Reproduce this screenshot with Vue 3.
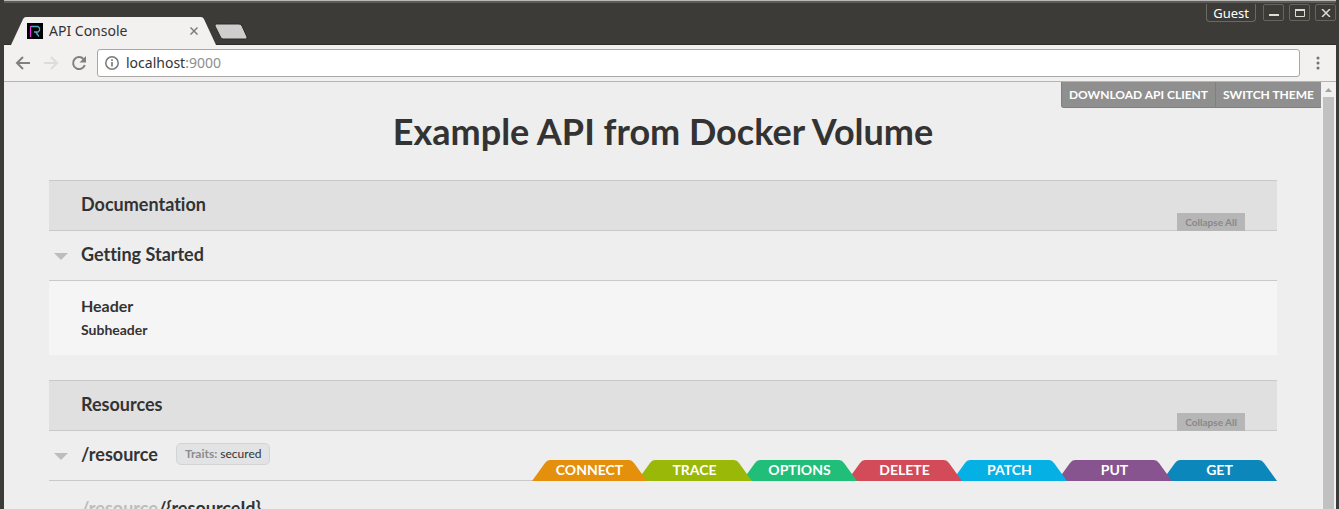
<script setup>
const methods = [
  { name: 'CONNECT', cls: 'connect' },
  { name: 'TRACE', cls: 'trace' },
  { name: 'OPTIONS', cls: 'options' },
  { name: 'DELETE', cls: 'delete' },
  { name: 'PATCH', cls: 'patch' },
  { name: 'PUT', cls: 'put' },
  { name: 'GET', cls: 'get' },
]
</script>

<template>
  <div class="window">
    <header class="titlebar">
      <div class="tabs">
        <div class="tab">
          <svg class="tab-shape" viewBox="0 0 204 28" preserveAspectRatio="none" aria-hidden="true">
            <path d="M0 28 L12 2 Q13 0 15 0 H189 Q191 0 192 2 L204 28 Z" fill="#f2f1f0" />
          </svg>
          <svg class="favicon" width="16" height="16" viewBox="0 0 16 16" aria-hidden="true">
            <rect width="16" height="16" fill="#000" />
            <path d="M3.500 14 V3.500 H5" fill="none" stroke="#e935e0" stroke-width="1.200" />
            <path d="M4 3.500 H11 L12.500 5 V7.500 L11 9 H7 M9 9.500 L12 13.500" fill="none" stroke="#4fa6c4" stroke-width="1.300" />
          </svg>
          <span class="tab-title">API Console</span>
          <button class="tab-close" aria-label="Close tab">
            <svg width="8" height="8" viewBox="0 0 8 8"><path d="M.5 .5 L7.500 7.500 M7.500 .5 L.5 7.500" stroke="#7d7c7a" stroke-width="1.500" /></svg>
          </button>
        </div>
        <button class="new-tab" aria-label="New tab">
          <svg width="34" height="17" viewBox="0 0 34 17"><path d="M2.500 1 H25 Q27 1 28 3 L33 14 Q33.500 16 31.500 16 H9 Q7.500 16 6.500 14 L1 3 Q.5 1 2.500 1 Z" fill="#d0cecc" stroke="#2c2b28" /></svg>
        </button>
      </div>
      <div class="controls">
        <button class="guest">Guest</button>
        <button class="win-btn" aria-label="Minimize">
          <svg width="10" height="8" viewBox="0 0 10 8"><path d="M0 6 H10" stroke="#dfdbd2" stroke-width="2" /></svg>
        </button>
        <button class="win-btn" aria-label="Maximize">
          <svg width="10" height="8" viewBox="0 0 10 8"><path d="M.5 0 V7.500 H9.500 V0" fill="none" stroke="#dfdbd2" /><path d="M0 1 H10" stroke="#dfdbd2" stroke-width="2" /></svg>
        </button>
        <button class="win-btn" aria-label="Close">
          <svg width="10" height="8" viewBox="0 0 10 8"><path d="M1 0 L9 8 M9 0 L1 8" stroke="#dfdbd2" stroke-width="1.500" /></svg>
        </button>
      </div>
    </header>

    <nav class="toolbar">
      <button class="nav" aria-label="Back">
        <svg width="16" height="16" viewBox="0 0 16 16"><path d="M15 8 H2 M8 2 L2 8 L8 14" fill="none" stroke="#80807e" stroke-width="2" /></svg>
      </button>
      <button class="nav" aria-label="Forward">
        <svg width="16" height="16" viewBox="0 0 16 16"><path d="M1 8 H14 M8 2 L14 8 L8 14" fill="none" stroke="#dddcdb" stroke-width="2" /></svg>
      </button>
      <button class="nav" aria-label="Reload">
        <svg width="16" height="16" viewBox="0 0 16 16"><path d="M13.800 10 A6 6 0 1 1 12.500 4" fill="none" stroke="#80807e" stroke-width="2" /><path d="M15 1 V7.500 H8.500 Z" fill="#80807e" /></svg>
      </button>
      <label class="address">
        <svg width="14" height="14" viewBox="0 0 14 14" aria-hidden="true"><circle cx="7" cy="7" r="6.200" fill="none" stroke="#7a7a7a" stroke-width="1.500" /><path d="M7 6 V10.500 M7 3.300 V5" stroke="#7a7a7a" stroke-width="1.700" /></svg>
        <span class="url" role="textbox" aria-label="Address" contenteditable="true">localhost<span class="port">:9000</span></span>
      </label>
      <button class="menu" aria-label="Menu">
        <svg width="4" height="14" viewBox="0 0 4 14"><circle cx="2" cy="2" r="1.500" /><circle cx="2" cy="7" r="1.500" /><circle cx="2" cy="12" r="1.500" /></svg>
      </button>
    </nav>

    <div class="viewport">
      <main class="page">
        <div class="page-actions">
          <button>DOWNLOAD API CLIENT</button>
          <button>SWITCH THEME</button>
        </div>
        <h1>Example API from Docker Volume</h1>

        <section>
          <div class="section-head">
            <h2>Documentation</h2>
            <button class="collapse">Collapse All</button>
          </div>
          <div class="row">
            <button class="arrow" aria-label="Toggle Getting Started"></button>
            <h2>Getting Started</h2>
          </div>
          <div class="doc">
            <h3>Header</h3>
            <h4>Subheader</h4>
          </div>
        </section>

        <section>
          <div class="section-head">
            <h2>Resources</h2>
            <button class="collapse">Collapse All</button>
          </div>
          <div class="row">
            <button class="arrow" aria-label="Toggle /resource"></button>
            <h2>/resource</h2>
            <span class="traits"><b>Traits:</b> secured</span>
            <div class="methods">
              <button v-for="m in methods" :key="m.name" class="method" :class="m.cls">
                <svg viewBox="0 0 115 21" preserveAspectRatio="none" aria-hidden="true">
                  <path d="M0 21 L13 3 Q15 0 18 0 H97 Q100 0 102 3 L115 21 Z" />
                </svg>
                <span>{{ m.name }}</span>
              </button>
            </div>
          </div>
          <div class="row last">
            <h2><span class="parent">/resource</span>/{resourceId}</h2>
          </div>
        </section>
      </main>
      <div class="scrollbar" aria-hidden="true">
        <svg width="7" height="4" viewBox="0 0 7 4"><path d="M0 4 L3.500 0 L7 4 Z" fill="#a3a3a3" /></svg>
        <div class="thumb"></div>
      </div>
    </div>
  </div>
</template>

<style>
body {
  overflow: hidden;
}
</style>

<style scoped>
* {
  box-sizing: border-box;
}
button {
  margin: 0;
  padding: 0;
  border: 0;
  background: none;
  font: inherit;
  color: inherit;
}
svg {
  display: block;
}
.window {
  height: 100vh;
  display: flex;
  flex-direction: column;
  overflow: hidden;
  background: #f2f1f0;
  border: solid #3c3b37;
  border-width: 0 3px 0 4px;
  font-family: Lato, sans-serif;
  font-variant-ligatures: none;
  color: #333;
}
.titlebar {
  display: flex;
  justify-content: space-between;
  align-items: flex-start;
  height: 45px;
  flex: none;
  background: #3c3b37;
  border-top: 1px solid #b9b8b6;
  box-shadow: inset 0 2px 0 #5d5c58, inset 0 -1px 0 #2e2d29;
  font-family: "Noto Sans", sans-serif;
}
.tabs {
  display: flex;
  align-items: flex-start;
  padding: 16px 0 0 7px;
}
.tab {
  position: relative;
  display: flex;
  align-items: center;
  width: 205px;
  height: 28px;
  padding: 0 18px 0 16px;
}
.tab-shape {
  position: absolute;
  inset: 0;
  width: 100%;
  height: 100%;
}
.favicon,
.tab-title,
.tab-close {
  position: relative;
}
.tab-title {
  flex: 1;
  margin-left: 6px;
  font-size: 14px;
  line-height: 20px;
  color: #333;
}
.new-tab {
  margin-top: 6px;
  margin-left: -2px;
}
.controls {
  display: flex;
  align-items: flex-start;
  gap: 5px;
  padding: 3px 0 0;
}
.guest {
  height: 18px;
  padding: 0 6px;
  margin-right: 2px;
  border: 1px solid #6a6965;
  border-top: 0;
  border-radius: 0 0 4px 4px;
  font-size: 13px;
  line-height: 18px;
  color: #fff;
}
.win-btn {
  display: grid;
  place-items: center;
  width: 21px;
  height: 17px;
  border: 1px solid #66655f;
  border-radius: 2px;
}
.toolbar {
  display: flex;
  align-items: center;
  flex: none;
  height: 37px;
  padding: 0 16px 0 11px;
  border-bottom: 1px solid #b6b4b2;
}
.nav {
  width: 16px;
  margin-right: 12px;
}
.nav:nth-child(3) {
  margin-right: 10px;
}
.address {
  display: flex;
  align-items: center;
  flex: 1;
  height: 28px;
  padding: 0 7px;
  background: #fff;
  border: 1px solid #a9a7a5;
  border-radius: 3px;
}
.url {
  flex: 1;
  margin-left: 7px;
  font-family: "Noto Sans", sans-serif;
  font-size: 14px;
  line-height: 20px;
  color: #333;
}
.port {
  color: #8e8e8e;
}
.menu {
  margin-left: 16px;
  fill: #737270;
}
.viewport {
  display: flex;
  flex: 1;
  min-height: 0;
  background: #eee;
}
.page {
  position: relative;
  flex: 1;
  padding: 0 44px 0 45px;
  overflow: hidden;
}
.page-actions {
  position: absolute;
  top: 0;
  right: 0;
  display: flex;
  background: #8f8f8f;
  border: solid #808080;
  border-width: 0 0 1px 1px;
  border-radius: 0 0 0 3px;
}
.page-actions button {
  height: 25px;
  padding: 0 7px;
  font-size: 12px;
  font-weight: 700;
  line-height: 25px;
  color: #fff;
}
.page-actions button + button {
  border-left: 1px solid #808080;
}
h1,
h2,
h3,
h4 {
  margin: 0;
  font-weight: 700;
}
h1 {
  padding: 26px 0;
  font-size: 36px;
  line-height: 46px;
  text-align: center;
}
h2 {
  font-size: 18px;
  line-height: 24px;
}
section {
  margin-bottom: 25px;
}
.section-head,
.row {
  position: relative;
  display: flex;
  align-items: center;
  height: 50px;
  padding: 0 32px 3px;
  border-bottom: 1px solid #c9c9c9;
}
.section-head {
  height: 51px;
  background: #e0e0e0;
  border-top: 1px solid #c9c9c9;
}
.collapse {
  position: absolute;
  right: 32px;
  bottom: -1px;
  height: 18px;
  padding: 0 8px;
  background: #b6b6b6;
  font-size: 10px;
  font-weight: 700;
  line-height: 18px;
  color: #888;
}
.arrow {
  position: absolute;
  left: 5px;
  top: 22px;
  border: solid transparent;
  border-width: 7px 7px 0;
  border-top-color: #bdbdbd;
}
.doc {
  height: 74px;
  padding: 13px 32px;
  background: #f5f5f5;
}
h3 {
  font-size: 16px;
  line-height: 24px;
}
h4 {
  font-size: 14px;
  line-height: 24px;
}
.traits {
  margin-left: 18px;
  padding: 0 8px;
  background: #e1e3e4;
  border: 1px solid #d2d5d7;
  border-radius: 5px;
  font-size: 12px;
  line-height: 20px;
}
.traits b {
  color: #8c8c8c;
}
.methods {
  position: absolute;
  right: 0;
  bottom: -1px;
  display: flex;
}
.method {
  position: relative;
  width: 115px;
  height: 21px;
  margin-left: -10px;
  font-size: 14px;
  font-weight: 700;
  line-height: 20px;
  color: #fff;
}
.method svg {
  position: absolute;
  inset: 0;
  width: 100%;
  height: 100%;
}
.method span {
  position: relative;
  display: block;
  height: 21px;
}
.connect { z-index: 7; fill: #e4900c; }
.trace { z-index: 6; fill: #9ab808; }
.options { z-index: 5; fill: #20be78; }
.delete { z-index: 4; fill: #d34a58; }
.patch { z-index: 3; fill: #04b0e4; }
.put { z-index: 2; fill: #88548f; }
.get { z-index: 1; fill: #0c87bb; }
.last {
  height: 58px;
}
.parent {
  color: #bdbdbd;
}
.scrollbar {
  flex: none;
  display: flex;
  flex-direction: column;
  align-items: center;
  gap: 5px;
  width: 15px;
  padding: 6px 2px 0 1px;
  background: #f1f1f1;
}
.thumb {
  flex: 1;
  width: 11px;
  background: #c1c1c1;
}
</style>
